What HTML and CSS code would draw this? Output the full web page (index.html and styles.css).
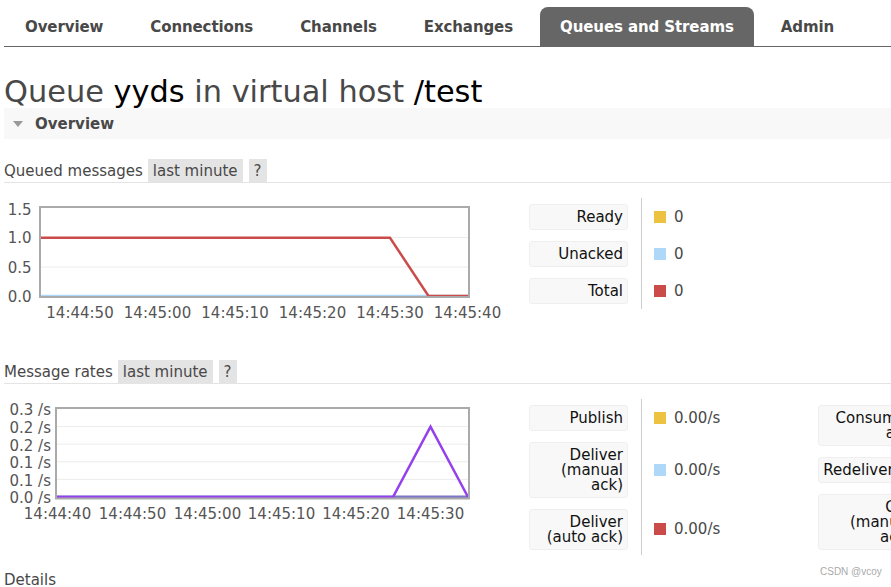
FILE: index.html
```html
<!DOCTYPE html>
<html lang="en">
<head>
<meta charset="utf-8">
<title>Queue yyds</title>
<link rel="stylesheet" href="styles.css">
</head>
<body>
<nav class="tabs">
  <a class="tab">Overview</a>
  <a class="tab">Connections</a>
  <a class="tab">Channels</a>
  <a class="tab">Exchanges</a>
  <a class="tab active">Queues and Streams</a>
  <a class="tab">Admin</a>
</nav>

<h1 class="title">Queue <span class="name">yyds</span> in virtual host <span class="name">/test</span></h1>

<div class="section-bar"><span class="tri"></span>Overview</div>

<div class="h-row">
  <span class="h-label">Queued messages</span>
  <span class="chip">last minute</span>
  <span class="chip">?</span>
</div>

<div class="chart-row">
  <svg class="chart" width="516" height="130" viewBox="4 196 516 130">
    <g class="grid">
      <line x1="41" y1="237.5" x2="468" y2="237.5"/>
      <line x1="41" y1="267" x2="468" y2="267"/>
    </g>
    <polyline class="s-blue" points="41,296.2 468,296.2"/>
    <polyline class="s-red" points="41,237.8 390,237.8 428.5,296 468,296"/>
    <rect class="frame" x="40" y="207" width="429" height="90"/>
    <g class="axis y-axis">
      <text x="31.5" y="215">1.5</text>
      <text x="31.5" y="243">1.0</text>
      <text x="31.5" y="273">0.5</text>
      <text x="31.5" y="302">0.0</text>
    </g>
    <g class="axis x-axis">
      <text x="80" y="318">14:44:50</text>
      <text x="157.5" y="318">14:45:00</text>
      <text x="235" y="318">14:45:10</text>
      <text x="312.5" y="318">14:45:20</text>
      <text x="390" y="318">14:45:30</text>
      <text x="467.5" y="318">14:45:40</text>
    </g>
  </svg>

  <div class="legend">
    <div class="lg-label"><div class="lg-box">Ready</div></div>
    <div class="lg-value"><span class="sw sw-yellow"></span>0</div>
    <div class="lg-label"><div class="lg-box">Unacked</div></div>
    <div class="lg-value"><span class="sw sw-blue"></span>0</div>
    <div class="lg-label"><div class="lg-box">Total</div></div>
    <div class="lg-value"><span class="sw sw-red"></span>0</div>
  </div>
</div>

<div class="h-row h-row-2">
  <span class="h-label">Message rates</span>
  <span class="chip">last minute</span>
  <span class="chip">?</span>
</div>

<div class="chart-row chart-row-2">
  <svg class="chart" width="516" height="130" viewBox="4 398 516 130">
    <g class="grid">
      <line x1="57" y1="426.6" x2="468" y2="426.6"/>
      <line x1="57" y1="444.2" x2="468" y2="444.2"/>
      <line x1="57" y1="461.8" x2="468" y2="461.8"/>
      <line x1="57" y1="479.4" x2="468" y2="479.4"/>
    </g>
    <polyline class="s-mix" points="57,497 468,497"/>
    <polyline class="s-purple" points="57,497 393,497 430.5,426.6 468,497"/>
    <rect class="frame" x="56" y="408" width="413" height="90.5"/>
    <g class="axis y-axis">
      <text x="51" y="415">0.3 /s</text>
      <text x="51" y="433">0.2 /s</text>
      <text x="51" y="451">0.2 /s</text>
      <text x="51" y="468">0.1 /s</text>
      <text x="51" y="486">0.1 /s</text>
      <text x="51" y="503">0.0 /s</text>
    </g>
    <g class="axis x-axis">
      <text x="57.5" y="519">14:44:40</text>
      <text x="132.5" y="519">14:44:50</text>
      <text x="207.5" y="519">14:45:00</text>
      <text x="281.5" y="519">14:45:10</text>
      <text x="356" y="519">14:45:20</text>
      <text x="430.5" y="519">14:45:30</text>
    </g>
  </svg>

  <div class="legend">
    <div class="lg-label"><div class="lg-box">Publish</div></div>
    <div class="lg-value"><span class="sw sw-yellow"></span>0.00/s</div>
    <div class="lg-label"><div class="lg-box">Deliver (manual ack)</div></div>
    <div class="lg-value"><span class="sw sw-blue"></span>0.00/s</div>
    <div class="lg-label"><div class="lg-box">Deliver (auto ack)</div></div>
    <div class="lg-value"><span class="sw sw-red"></span>0.00/s</div>
  </div>

  <div class="legend legend-side">
    <div class="lg-label"><div class="lg-box">Consumer ack</div></div>
    <div class="lg-value"><span class="sw sw-green"></span>0.00/s</div>
    <div class="lg-label"><div class="lg-box">Redelivered</div></div>
    <div class="lg-value"><span class="sw sw-purple"></span>0.00/s</div>
    <div class="lg-label"><div class="lg-box">Get (manual ack)</div></div>
    <div class="lg-value"><span class="sw sw-grey"></span>0.00/s</div>
  </div>
</div>

<div class="details">Details</div>

<div class="watermark">CSDN @vcoy</div>
</body>
</html>
```

FILE: styles.css
```css
html {
  overflow: hidden;
}

body {
  margin: 0;
  padding: 0 0 0 4px;
  font-family: "DejaVu Sans", Verdana, sans-serif;
  font-size: 15px;
  color: #484848;
  background: #fff;
  position: relative;
  min-height: 587px;
}

/* ---------- tabs ---------- */
.tabs {
  display: flex;
  gap: 7px;
  margin-top: 7px;
  padding-left: 1px;
  border-bottom: 1px solid #666;
}

.tab {
  display: block;
  height: 39px;
  line-height: 41px;
  padding: 0 20px;
  font-weight: bold;
  font-size: 15px;
  letter-spacing: -0.1px;
  color: #484848;
  border-radius: 8px 8px 0 0;
  white-space: nowrap;
}

.tab.active {
  background: #666;
  color: #fff;
}

/* ---------- title ---------- */
.title {
  margin: 29px 0 0;
  font-size: 30.4px;
  line-height: 32px;
  font-weight: normal;
  color: #484848;
  white-space: nowrap;
}

.name {
  color: #000;
}

/* ---------- section bar ---------- */
.section-bar {
  height: 31px;
  display: flex;
  align-items: center;
  padding-left: 9px;
  background: #f8f8f8;
  font-weight: bold;
  font-size: 15px;
  color: #484848;
}

.tri {
  width: 0;
  height: 0;
  border-left: 5.5px solid transparent;
  border-right: 5.5px solid transparent;
  border-top: 6px solid #999;
  margin-right: 12px;
}

/* ---------- sub headings ---------- */
.h-row {
  display: flex;
  height: 23px;
  line-height: 25px;
  margin-top: 20px;
  border-bottom: 1px solid #e4e4e4;
  white-space: nowrap;
}

.h-row-2 {
  margin-top: 34px;
}

.h-label {
  color: #484848;
  margin-right: 5px;
}

.chip {
  background: #e4e4e4;
  padding: 0 5px;
  margin-right: 6px;
  color: #484848;
}

/* ---------- charts ---------- */
.chart-row {
  display: flex;
  align-items: flex-start;
  margin-top: 13px;
}

.chart-row-2 {
  margin-top: 14px;
}

.chart {
  display: block;
  flex: none;
}

.grid line {
  stroke: #ececec;
  stroke-width: 1;
}

.frame {
  fill: none;
  stroke: #aaa;
  stroke-width: 2;
}

.s-red {
  fill: none;
  stroke: #cb4b4b;
  stroke-width: 2.5;
}

.s-blue {
  fill: none;
  stroke: #afd8f8;
  stroke-width: 3;
}

.s-purple {
  fill: none;
  stroke: #9440ed;
  stroke-width: 2.5;
  stroke-linejoin: miter;
}

.s-mix {
  fill: none;
  stroke: #7c76c6;
  stroke-width: 3;
}

.axis text {
  font-family: "DejaVu Sans", Verdana, sans-serif;
  font-size: 15px;
  fill: #555;
}

.y-axis text {
  text-anchor: end;
}

.x-axis text {
  text-anchor: middle;
}

/* ---------- legends ---------- */
.legend {
  display: grid;
  grid-template-columns: 112px 150px;
  margin-left: 9px;
  margin-top: 2px;
  flex: none;
}

.chart-row-2 .legend {
  margin-top: 1px;
}

.chart-row-2 .legend-side {
  margin-left: 27px;
}

.lg-label {
  padding: 5.5px 13px 5.5px 0;
}

.lg-box {
  background: #f8f8f8;
  border: 1px solid #efefef;
  border-radius: 3px;
  padding: 5.5px 4px 3.5px 2px;
  text-align: right;
  font-size: 15px;
  line-height: 15px;
  color: #111;
}

.lg-value {
  border-left: 1px solid #ccc;
  padding-left: 12px;
  display: flex;
  align-items: center;
  gap: 8px;
  font-size: 15px;
  color: #484848;
  white-space: nowrap;
}

.sw {
  width: 12px;
  height: 12px;
  flex: none;
}

.sw-yellow { background: #edc240; }
.sw-blue { background: #afd8f8; }
.sw-red { background: #cb4b4b; }
.sw-green { background: #4da74d; }
.sw-purple { background: #9440ed; }
.sw-grey { background: #bbb; }

/* ---------- footer bits ---------- */
.details {
  margin-top: 16px;
  font-size: 15px;
  line-height: 18px;
  color: #484848;
}

.watermark {
  position: absolute;
  left: 820px;
  top: 566px;
  font-family: "Liberation Sans", Arial, sans-serif;
  font-size: 10px;
  color: #aaa;
}
```
